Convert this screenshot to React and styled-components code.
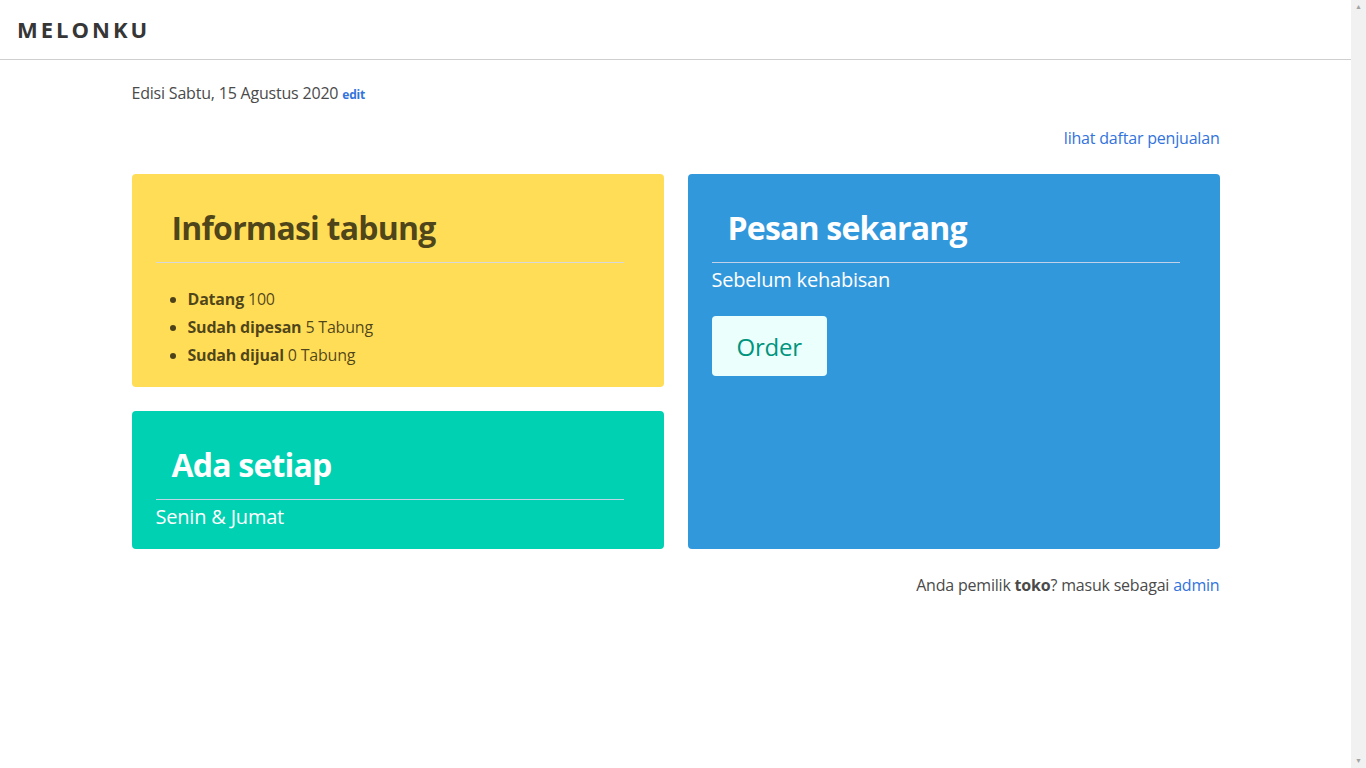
import styled, { createGlobalStyle } from "styled-components";

const GlobalStyle = createGlobalStyle`
  body {
    margin: 0;
    font-family: "Open Sans", "Noto Sans", sans-serif;
    font-size: 16px;
    line-height: 1.5;
    letter-spacing: -0.2px;
    color: #4a4a4a;
    background: #ffffff;
    overflow: hidden;
  }
  * {
    box-sizing: border-box;
  }
`;

const stock = [
  { label: "Datang", value: "100" },
  { label: "Sudah dipesan", value: "5 Tabung" },
  { label: "Sudah dijual", value: "0 Tabung" },
];

export default function App() {
  return (
    <Window>
      <GlobalStyle />
      <Page>
        <Navbar>
          <Brand>MELONKU</Brand>
        </Navbar>

        <Container>
          <Edition>
            Edisi Sabtu, 15 Agustus 2020 <SmallLink href="#">edit</SmallLink>
          </Edition>

          <RightLine>
            <TextLink href="#">lihat daftar penjualan</TextLink>
          </RightLine>

          <Columns>
            <Column>
              <Notification bg="#ffdd57" color="rgba(0, 0, 0, 0.7)">
                <Title>Informasi tabung</Title>
                <Divider />
                <StockList>
                  {stock.map((item) => (
                    <li key={item.label}>
                      <strong>{item.label}</strong> {item.value}
                    </li>
                  ))}
                </StockList>
              </Notification>

              <Notification bg="#00d1b2" color="#ffffff">
                <Title>Ada setiap</Title>
                <Divider />
                <Subtitle>Senin &amp; Jumat</Subtitle>
              </Notification>
            </Column>

            <Notification bg="#3298dc" color="#ffffff">
              <Title>Pesan sekarang</Title>
              <Divider />
              <Subtitle spaced>Sebelum kehabisan</Subtitle>
              <OrderButton>Order</OrderButton>
            </Notification>
          </Columns>

          <Footer>
            Anda pemilik <strong>toko</strong>? masuk sebagai{" "}
            <TextLink href="#">admin</TextLink>
          </Footer>
        </Container>
      </Page>

      <ScrollTrack>
        <Arrow>&#9650;</Arrow>
        <Arrow>&#9660;</Arrow>
      </ScrollTrack>
    </Window>
  );
}

const Window = styled.div`
  display: flex;
  height: 100vh;
`;

const Page = styled.div`
  flex: 1;
  min-width: 0;
`;

const ScrollTrack = styled.div`
  width: 15px;
  flex-shrink: 0;
  background: #f1f1f1;
  display: flex;
  flex-direction: column;
  justify-content: space-between;
  align-items: center;
  padding: 2px 0;
`;

const Arrow = styled.span`
  font-size: 7px;
  line-height: 10px;
  color: #a3a3a3;
  letter-spacing: 0;
`;

const Navbar = styled.nav`
  height: 60px;
  display: flex;
  align-items: center;
  padding-left: 17px;
  border-bottom: 1px solid #cfcfcf;
`;

const Brand = styled.h1`
  margin: 0;
  font-size: 22px;
  font-weight: 700;
  letter-spacing: 3px;
  color: #363636;
`;

const Container = styled.main`
  width: 1088px;
  margin: 0 auto;
  padding-top: 21px;
`;

const Edition = styled.p`
  margin: 0;
  line-height: 24px;
`;

const SmallLink = styled.a`
  font-size: 12px;
  font-weight: 700;
  color: #3273dc;
  text-decoration: none;
`;

const TextLink = styled.a`
  color: #3273dc;
  text-decoration: none;
`;

const RightLine = styled.p`
  margin: 19px 0 0;
  text-align: right;
  line-height: 24px;
`;

const Columns = styled.div`
  display: grid;
  grid-template-columns: 1fr 1fr;
  gap: 24px;
  margin-top: 24px;
`;

const Column = styled.div`
  display: flex;
  flex-direction: column;
  gap: 24px;
`;

const Notification = styled.div`
  background: ${(p) => p.bg};
  color: ${(p) => p.color};
  border-radius: 4px;
  padding: 20px 40px 20px 24px;
`;

const Title = styled.h2`
  margin: 0;
  padding: 16px;
  font-size: 32px;
  font-weight: 700;
  letter-spacing: -0.8px;
  line-height: 36px;
`;

const Divider = styled.hr`
  margin: 0;
  border: none;
  border-top: 1px solid rgba(210, 215, 235, 0.9);
`;

const StockList = styled.ul`
  margin: 24px 0 0;
  padding-left: 32px;

  li {
    line-height: 24px;
  }
  li + li {
    margin-top: 4px;
  }
`;

const Subtitle = styled.p`
  margin: 4px 0 ${(p) => (p.spaced ? "24px" : "0")};
  font-size: 20px;
  line-height: 25px;
`;

const OrderButton = styled.button`
  height: 60px;
  padding: 0 24px;
  border: 1px solid transparent;
  border-radius: 4px;
  background: #ebfffc;
  color: #00947e;
  font-family: inherit;
  font-size: 24px;
  letter-spacing: -0.2px;
  cursor: pointer;
`;

const Footer = styled.p`
  margin: 24px 0 0;
  text-align: right;
  line-height: 24px;
`;
